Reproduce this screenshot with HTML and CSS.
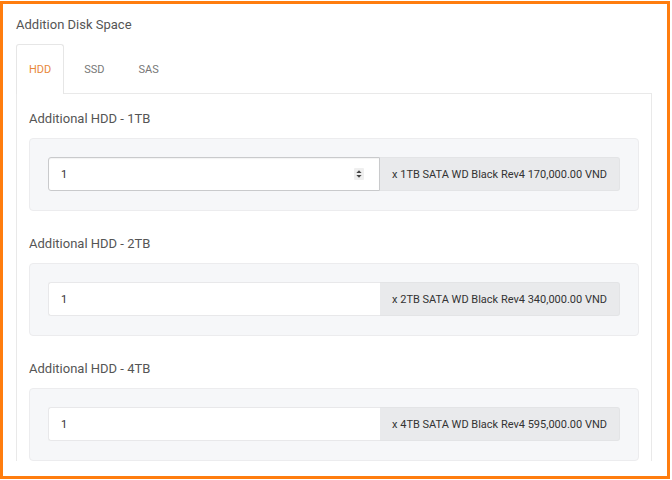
FILE: index.html
```html
<!DOCTYPE html>
<html>
<head>
<meta charset="utf-8">
<link rel="stylesheet" href="styles.css">
</head>
<body>
<div class="frame">
  <div class="title">Addition Disk Space</div>
  <div class="tabs">
    <div class="tab active">HDD</div>
    <div class="tab">SSD</div>
    <div class="tab">SAS</div>
  </div>
  <div class="panel">
    <div class="group">
      <div class="label">Additional HDD - 1TB</div>
      <div class="well">
        <div class="input-group">
          <div class="input focused"><span>1</span>
            <svg class="spin" width="10" height="12" viewBox="0 0 10 12"><rect x="0" y="0" width="10" height="12" rx="1" fill="#efefef"/><path d="M5 2.2 L7.6 5 L2.4 5 Z" fill="#444"/><path d="M5 9.8 L7.6 7 L2.4 7 Z" fill="#444"/></svg>
          </div>
          <div class="addon">x 1TB SATA WD Black Rev4 170,000.00 VND</div>
        </div>
      </div>
    </div>
    <div class="group">
      <div class="label">Additional HDD - 2TB</div>
      <div class="well">
        <div class="input-group">
          <div class="input"><span>1</span></div>
          <div class="addon">x 2TB SATA WD Black Rev4 340,000.00 VND</div>
        </div>
      </div>
    </div>
    <div class="group">
      <div class="label">Additional HDD - 4TB</div>
      <div class="well">
        <div class="input-group">
          <div class="input"><span>1</span></div>
          <div class="addon">x 4TB SATA WD Black Rev4 595,000.00 VND</div>
        </div>
      </div>
    </div>
  </div>
</div>
</body>
</html>
```
FILE: styles.css
```css
html, body {
  margin: 0;
  padding: 0;
  background: #ffffff;
}
body {
  font-family: Roboto, "Liberation Sans", sans-serif;
  width: 672px;
  height: 480px;
  overflow: hidden;
}
.frame {
  box-sizing: border-box;
  margin-top: 1px;
  width: 670px;
  height: 478px;
  border: 3px solid #ff7d0e;
  padding: 11px 15px 0 13px;
  overflow: hidden;
  background: #fff;
}
.title {
  font-size: 13px;
  line-height: 20px;
  color: #555;
  margin-bottom: 9px;
}
.tabs {
  display: flex;
  height: 49px;
  position: relative;
  z-index: 1;
}
.tab {
  box-sizing: border-box;
  height: 50px;
  padding: 0 13px 0 12px;
  margin-right: 7px;
  display: flex;
  align-items: center;
  font-size: 11px;
  color: #777;
  border: 1px solid transparent;
  border-bottom: none;
}
.tab.active {
  color: #e8883a;
  background: #fff;
  border-color: #e6e6e6;
  border-radius: 3px 3px 0 0;
  padding: 0 12px 0 12px;
}
.panel {
  border: 1px solid #e9e9e9;
  border-bottom: none;
  padding: 15px 12px 0 12px;
}
.group {
  margin-bottom: 23px;
}
.label {
  font-size: 13px;
  line-height: 20px;
  color: #555;
  margin-bottom: 9px;
}
.well {
  background: #f6f7f9;
  border: 1px solid #ececee;
  border-radius: 4px;
  padding: 18px 18px 19px 18px;
}
.input-group {
  display: flex;
  height: 34px;
}
.input {
  box-sizing: border-box;
  width: 334px;
  height: 34px;
  background: #fff;
  border: 1px solid #e8e8ea;
  border-right: none;
  border-radius: 3px 0 0 3px;
  display: flex;
  align-items: center;
  justify-content: space-between;
  padding: 0 15px 0 12px;
  font-size: 11px;
  color: #333;
}
.input.focused {
  border: 1px solid #c9cacc;
  box-shadow: inset 0 1px 1px rgba(0,0,0,0.05);
}
.spin {
  display: block;
}
.addon {
  flex: 1;
  box-sizing: border-box;
  height: 34px;
  background: #e9eaec;
  border: 1px solid #e3e4e6;
  border-left: none;
  border-radius: 0 3px 3px 0;
  display: flex;
  align-items: center;
  justify-content: center;
  padding: 0 12px;
  font-size: 11px;
  color: #333;
  white-space: nowrap;
}
```
